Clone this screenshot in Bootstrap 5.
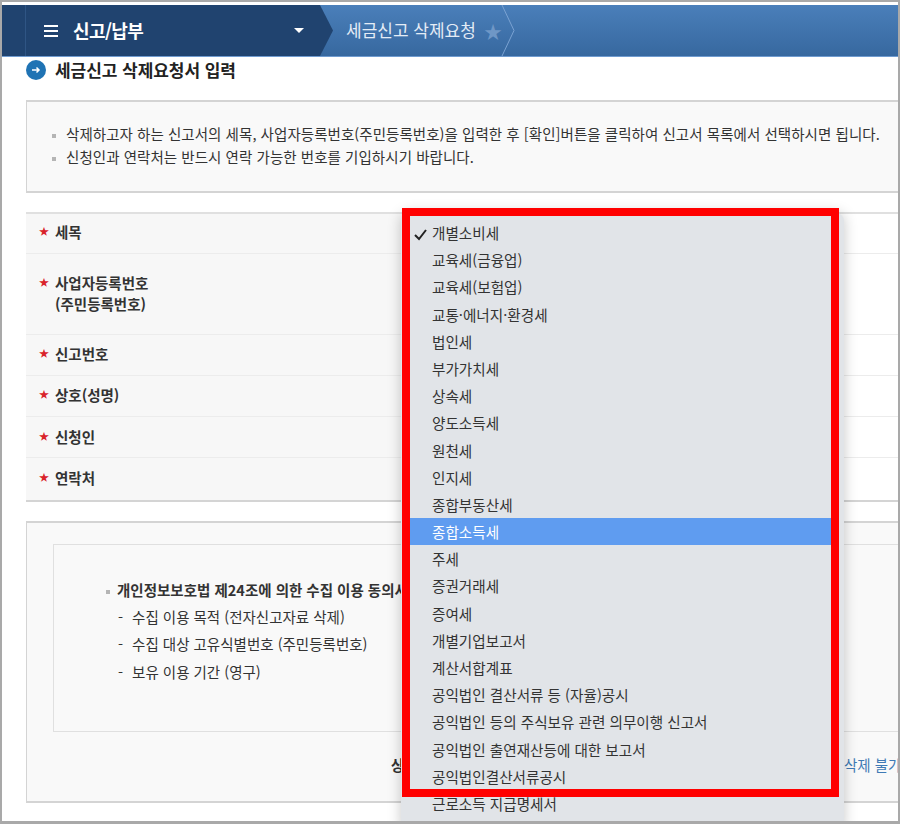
<!DOCTYPE html>
<html lang="ko">
<head>
<meta charset="utf-8">
<title>세금신고 삭제요청</title>
<link href="https://cdn.jsdelivr.net/npm/bootstrap@5.3.0/dist/css/bootstrap.min.css" rel="stylesheet">
<style>
html,body{margin:0;height:824px;overflow:hidden;background:#fff}
body{font-family:"Noto Sans CJK KR","Noto Sans",sans-serif;color:#333;font-size:14px;line-height:1.3}
.frame{position:relative;height:824px;border:2px solid #a9a9a9;border-bottom-width:3px;overflow:hidden;padding-top:3px}
.topbar{height:52px;background:linear-gradient(#4a7fba,#37689f);position:relative;border-bottom:1px solid #6f9bd0}
.crumb-dark{width:331px;height:100%;background:#20436f;clip-path:polygon(0 0,318px 0,331px 50%,318px 100%,0 100%);padding-left:42px;gap:15px}
.burger{width:14px;height:12px;border-top:2px solid #fff;border-bottom:2px solid #fff;position:relative}
.burger::after{content:"";position:absolute;left:0;right:0;top:3px;height:2px;background:#fff}
.topbar-title{font-size:18px;font-weight:700;color:#fff;width:206px;letter-spacing:-.6px}
.caret-mark{width:0;height:0;border:5px solid transparent;border-top-color:#fff;border-bottom:0}
.crumb-name{font-size:17px;color:#e4ecf6;margin-left:13px}
.star-mark{color:#6f97c6;font-size:18px;margin-left:8px;line-height:1}
.seam{position:absolute;left:23px;top:0;bottom:0;width:1px;background:#2f5584}
.chev{position:absolute;left:499px;top:0;height:100%;width:16px}
.main-area{padding:0 0 0 24px}
.section-head{height:26px;margin-bottom:17px;gap:9px;font-size:17px;font-weight:700;color:#222;letter-spacing:-.05px}
.bullet-go{width:20px;height:20px;border-radius:50%;background:#1f73b4}
.notice-box{background:#f9f9f9;border:1px solid #d4d4d4;border-width:2px 0 2px 1px;height:93px;padding:19.500px 0 0 25px;font-size:14.5px;line-height:23px;letter-spacing:.05px;white-space:nowrap}
.notice-box div::before,.agree-lead::before{content:"";display:inline-block;width:4px;height:4px;background:#b5b5b5;margin-right:10px;vertical-align:middle}
.form-rows{margin-top:19px;border-top:2px solid #e0e0e0;border-bottom:2px solid #d4d4d4}
.form-line{height:41.3px;background:#fff;border-bottom:1px solid #ececec}
.form-line:first-child{height:39.5px}
.form-line:last-child{border-bottom:0}
.form-line.tall{height:81px}
.form-label-cell{width:380px;height:100%;background:#f7f7f7;padding:8.500px 0 0 13px;font-size:14.5px;line-height:21px;font-weight:700;color:#333;gap:8px}
.form-line:first-child .form-label-cell{padding-top:6.500px}
.form-line.tall .form-label-cell{padding-top:18.500px}
.req{color:#d9232a;font-size:10px;line-height:19px;width:8px}
.consent-box{margin-top:19px;height:282px;background:#f9f9f9;border:1px solid #d4d4d4;border-width:2px 0 2px 1px;padding:21px 0 0 26px}
.consent-inner{height:188px;border:1px solid #e0e0e0;border-right:0;padding:31px 0 0 52px;font-size:14.5px;line-height:27.3px;white-space:nowrap}
.agree-lead{font-weight:700}
.agree-lead::before{margin-right:7px}
.agree-sub{padding-left:12px}
.agree-sub::before{content:"-";margin-right:9px}
.consent-foot{position:relative;margin-top:24px;font-size:14.5px;height:20px}
.foot-dark{position:absolute;left:338px;font-weight:700}
.foot-blue{position:absolute;left:791px;color:#3f7ab5;white-space:nowrap}
.select-popup{position:absolute;left:399px;top:211px;width:443px;height:620px;background:#e1e4e8;border-radius:8px;box-shadow:0 0 14px rgba(0,0,0,.22);padding:6px 13px 0 9px}
.pick{height:27.2px;line-height:27.2px;padding-left:22px;font-size:14.6px;color:#333;white-space:nowrap;position:relative}
.pick.on{background:#5f9cf0;color:#fff}
.pick svg{position:absolute;left:3px;top:9px}
.red-frame{position:absolute;left:400px;top:206px;width:437px;height:589px;border:8px solid #f00;pointer-events:none}
</style>
</head>
<body>
<div class="frame">
  <div class="topbar d-flex align-items-center">
    <div class="crumb-dark d-flex align-items-center">
      <span class="burger"></span>
      <span class="topbar-title">신고/납부</span>
      <span class="caret-mark"></span>
    </div>
    <span class="seam"></span>
    <span class="crumb-name">세금신고 삭제요청</span>
    <span class="star-mark">★</span>
    <svg class="chev" viewBox="0 0 16 52" preserveAspectRatio="none"><path d="M1 0L13 26L1 52" fill="none" stroke="#7ba3d2" stroke-width="1"/></svg>
  </div>
  <div class="main-area">
    <div class="section-head d-flex align-items-center">
      <span class="bullet-go d-flex align-items-center justify-content-center">
        <svg width="10" height="8" viewBox="0 0 10 8"><path d="M1 4H8M5.500 1.500L8 4L5.500 6.500" fill="none" stroke="#fff" stroke-width="1.500"/></svg>
      </span>
      <span>세금신고 삭제요청서 입력</span>
    </div>
    <div class="notice-box">
      <div>삭제하고자 하는 신고서의 세목, 사업자등록번호(주민등록번호)을 입력한 후 [확인]버튼을 클릭하여 신고서 목록에서 선택하시면 됩니다.</div>
      <div>신청인과 연락처는 반드시 연락 가능한 번호를 기입하시기 바랍니다.</div>
    </div>
    <div class="form-rows">
      <div class="form-line"><div class="form-label-cell d-flex"><span class="req">★</span><span>세목</span></div></div>
      <div class="form-line tall"><div class="form-label-cell d-flex"><span class="req">★</span><span>사업자등록번호<br>(주민등록번호)</span></div></div>
      <div class="form-line"><div class="form-label-cell d-flex"><span class="req">★</span><span>신고번호</span></div></div>
      <div class="form-line"><div class="form-label-cell d-flex"><span class="req">★</span><span>상호(성명)</span></div></div>
      <div class="form-line"><div class="form-label-cell d-flex"><span class="req">★</span><span>신청인</span></div></div>
      <div class="form-line"><div class="form-label-cell d-flex"><span class="req">★</span><span>연락처</span></div></div>
    </div>
    <div class="consent-box">
      <div class="consent-inner">
        <div class="agree-lead">개인정보보호법 제24조에 의한 수집 이용 동의서</div>
        <div class="agree-sub">수집 이용 목적 (전자신고자료 삭제)</div>
        <div class="agree-sub">수집 대상 고유식별번호 (주민등록번호)</div>
        <div class="agree-sub">보유 이용 기간 (영구)</div>
      </div>
      <div class="consent-foot"><span class="foot-dark">상</span><span class="foot-blue">삭제 불가</span></div>
    </div>
  </div>
  <div class="select-popup">
    <div class="pick"><svg width="15" height="13" viewBox="0 0 15 13"><path d="M2 7L6 11L13 2" fill="none" stroke="#222" stroke-width="2"/></svg>개별소비세</div>
    <div class="pick">교육세(금융업)</div>
    <div class="pick">교육세(보험업)</div>
    <div class="pick">교통·에너지·환경세</div>
    <div class="pick">법인세</div>
    <div class="pick">부가가치세</div>
    <div class="pick">상속세</div>
    <div class="pick">양도소득세</div>
    <div class="pick">원천세</div>
    <div class="pick">인지세</div>
    <div class="pick">종합부동산세</div>
    <div class="pick on">종합소득세</div>
    <div class="pick">주세</div>
    <div class="pick">증권거래세</div>
    <div class="pick">증여세</div>
    <div class="pick">개별기업보고서</div>
    <div class="pick">계산서합계표</div>
    <div class="pick">공익법인 결산서류 등 (자율)공시</div>
    <div class="pick">공익법인 등의 주식보유 관련 의무이행 신고서</div>
    <div class="pick">공익법인 출연재산등에 대한 보고서</div>
    <div class="pick">공익법인결산서류공시</div>
    <div class="pick">근로소득 지급명세서</div>
  </div>
  <div class="red-frame"></div>
</div>
<script src="https://cdn.jsdelivr.net/npm/bootstrap@5.3.0/dist/js/bootstrap.bundle.min.js"></script>
</body>
</html>
